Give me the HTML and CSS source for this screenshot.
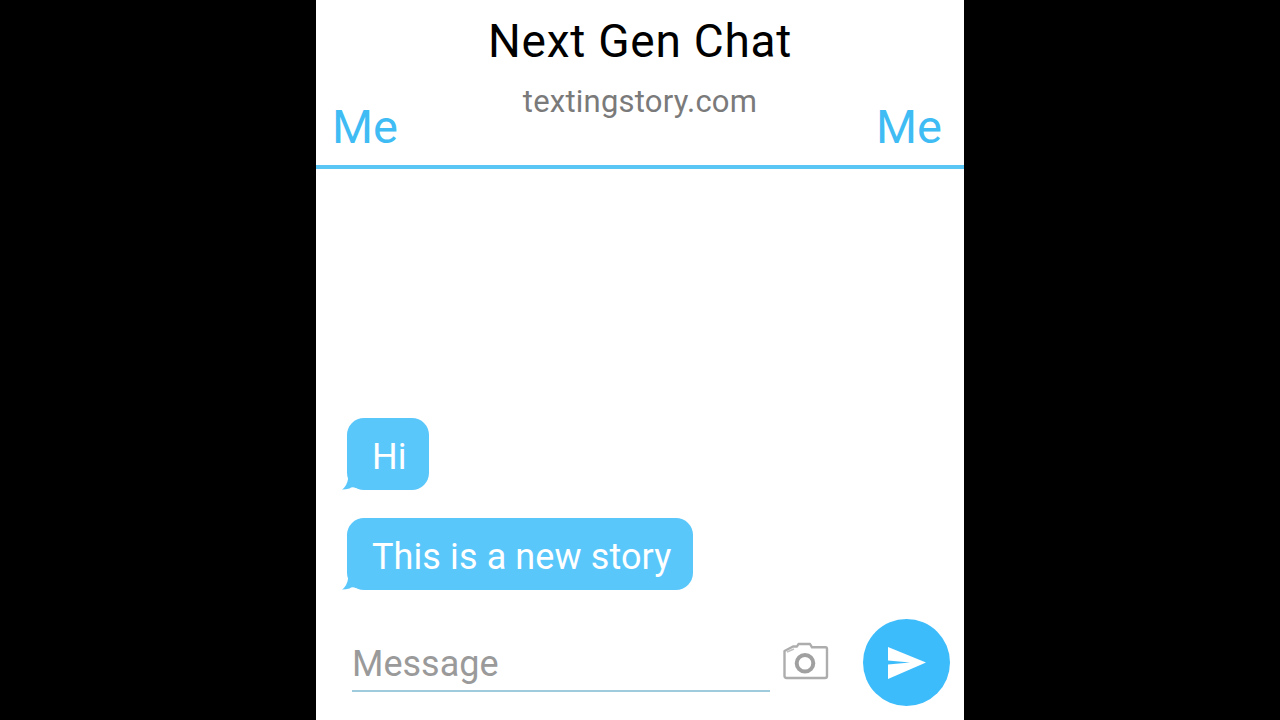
FILE: index.html
```html
<!DOCTYPE html>
<html lang="en">
<head>
<meta charset="utf-8">
<title>Next Gen Chat</title>
<link rel="stylesheet" href="styles.css">
</head>
<body>
<main class="phone">
  <header class="header">
    <h1 class="title">Next Gen Chat</h1>
    <div class="names">
      <span class="name">Me</span>
      <span class="site">textingstory.com</span>
      <span class="name">Me</span>
    </div>
  </header>
  <section class="messages">
    <div class="bubble">Hi<svg class="tail" viewBox="0 0 14 12"><path d="M6 0 L14 0 L14 9 Q10 7.500 7.500 9.500 Q4 10.500 0 10.500 Q5 7 6 0Z"/></svg></div>
    <div class="bubble">This is a new story<svg class="tail" viewBox="0 0 14 12"><path d="M6 0 L14 0 L14 9 Q10 7.500 7.500 9.500 Q4 10.500 0 10.500 Q5 7 6 0Z"/></svg></div>
  </section>
  <footer class="composer">
    <div class="input">Message</div>
    <svg class="camera" viewBox="0 0 46 38" fill="none">
      <path d="M1.500 9 L10 4.500 L14 4.500 L15.500 2 L27 2 L29 5.300 L42.500 5.300 Q44 5.300 44 7 L44 34 Q44 36 42 36 L3.500 36 Q1.500 36 1.500 34Z" stroke="#adadad" stroke-width="2.400" stroke-linejoin="round"/>
      <path d="M4 10 L11 7" stroke="#c0c0c0" stroke-width="1.500"/>
      <circle cx="22" cy="21.300" r="8.300" stroke="#a0a0a0" stroke-width="4"/>
    </svg>
    <button class="send" type="button" aria-label="Send">
      <svg viewBox="0 0 38 32" class="send-icon"><path d="M0 0 L38 15.500 L0 32 L0 17.500 L22 15.500 L0 13.500Z" fill="#fff"/></svg>
    </button>
  </footer>
</main>
</body>
</html>
```

FILE: styles.css
```css
* { box-sizing: border-box; }
html, body { margin: 0; height: 100%; background: #000; }
body { display: flex; justify-content: center; font-family: Roboto, "Liberation Sans", sans-serif; overflow: hidden; }
.phone { width: 648px; height: 720px; background: #fff; display: flex; flex-direction: column; }
.header { height: 169px; border-bottom: 4px solid #5ac6f5; display: flex; flex-direction: column; flex: none; }
.title { margin: 0; padding-top: 15px; height: 78px; text-align: center; font-size: 46px; line-height: 53px; letter-spacing: 0.75px; font-weight: 400; color: #000; }
.names { display: flex; justify-content: space-between; padding: 0 22px 0 16px; }
.name { font-size: 47px; line-height: 56px; padding-top: 21px; color: #3fbcf4; }
.site { font-size: 31px; line-height: 35px; letter-spacing: 0.22px; color: #7a7a7a; margin: 6px 0 0 6px; }
.messages { flex: 1; display: flex; flex-direction: column; align-items: flex-start; justify-content: flex-end; gap: 28px; padding: 0 0 7px 31px; }
.bubble { position: relative; height: 72px; padding: 5px 22px 0 25px; display: flex; align-items: center; background: #5ac7fb; color: #fff; border-radius: 17px; font-size: 36px; line-height: 42px; letter-spacing: 0.1px; }
.tail { position: absolute; left: -5px; bottom: -1px; width: 14px; height: 12px; fill: #5ac7fb; }
.composer { flex: none; height: 123px; display: flex; align-items: flex-start; padding-left: 36px; }
.input { width: 418px; height: 70px; margin-top: 25px; padding-top: 21px; border-bottom: 2px solid #9fcbdc; color: #9a9a9a; font-size: 36px; line-height: 42px; }
.camera { width: 46px; height: 38px; margin: 45px 0 0 13px; }
.send { width: 87px; height: 87px; margin: 22px 0 0 34px; padding: 0; border: 0; border-radius: 50%; background: #3dbcfb; display: flex; align-items: center; justify-content: center; }
.send-icon { width: 38px; height: 32px; }
```
